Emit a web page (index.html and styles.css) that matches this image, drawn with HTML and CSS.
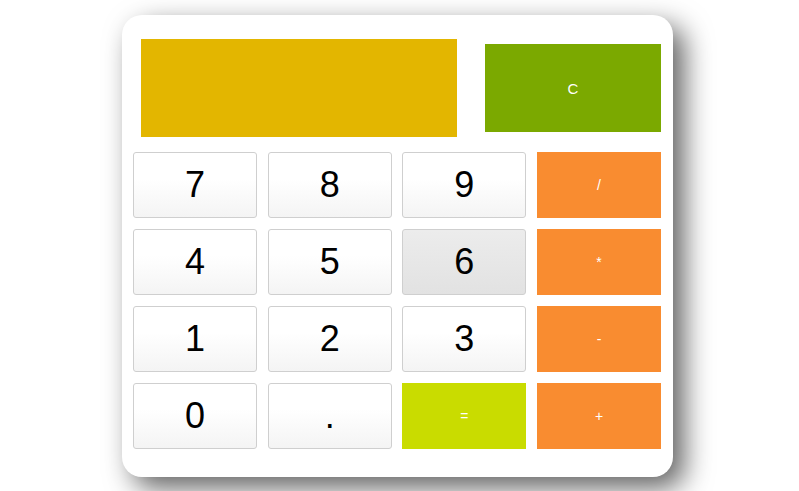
FILE: index.html
```html
<!DOCTYPE html>
<html>
<head>
<meta charset="utf-8">
<link rel="stylesheet" href="styles.css">
</head>
<body>
<div class="calc">
  <div class="top">
    <div class="display"></div>
    <button class="key clear">C</button>
  </div>
  <div class="keys">
    <button class="key num">7</button>
    <button class="key num">8</button>
    <button class="key num">9</button>
    <button class="key op">/</button>
    <button class="key num">4</button>
    <button class="key num">5</button>
    <button class="key num hover">6</button>
    <button class="key op">*</button>
    <button class="key num">1</button>
    <button class="key num">2</button>
    <button class="key num">3</button>
    <button class="key op">-</button>
    <button class="key num">0</button>
    <button class="key num">.</button>
    <button class="key eq">=</button>
    <button class="key op">+</button>
  </div>
</div>
</body>
</html>
```
FILE: styles.css
```css
html, body {
  margin: 0;
  padding: 0;
  background: #fff;
  font-family: "Liberation Sans", Arial, sans-serif;
}
html, body {
  height: 100%;
  overflow: hidden;
}
body {
  padding-top: 15px;
  box-sizing: border-box;
}
.calc {
  box-sizing: border-box;
  width: 551px;
  height: 462px;
  margin: 0 0 0 122px;
  padding: 24px 12px 28px 11px;
  background: #fff;
  border-radius: 20px;
  box-shadow: 11px 11px 28px rgba(0, 0, 0, 0.62);
}
.top {
  display: flex;
  align-items: center;
  justify-content: space-between;
  height: 98px;
  margin-bottom: 15px;
}
.display {
  width: 316px;
  height: 98px;
  margin-left: 8px;
  background: #e3b600;
}
.key {
  box-sizing: border-box;
  margin: 0;
  padding: 0;
  border: none;
  font-family: "Liberation Sans", Arial, sans-serif;
  display: flex;
  align-items: center;
  justify-content: center;
}
.clear {
  width: 176px;
  height: 88px;
  background: #7ba900;
  color: #fff;
  font-size: 15px;
}
.keys {
  display: grid;
  grid-template-columns: repeat(4, 124px);
  grid-auto-rows: 66px;
  justify-content: space-between;
  row-gap: 11px;
}
.num {
  border: 1px solid #cfcfcf;
  border-radius: 3px;
  background: linear-gradient(#ffffff 40%, #f4f4f4);
  color: #000;
  font-size: 36px;
}
.num.hover {
  background: linear-gradient(#ececec, #e2e2e2);
}
.op {
  background: #f98c30;
  color: #fff;
  font-size: 14px;
}
.eq {
  background: #c9dc00;
  color: #fff;
  font-size: 14px;
}
```
